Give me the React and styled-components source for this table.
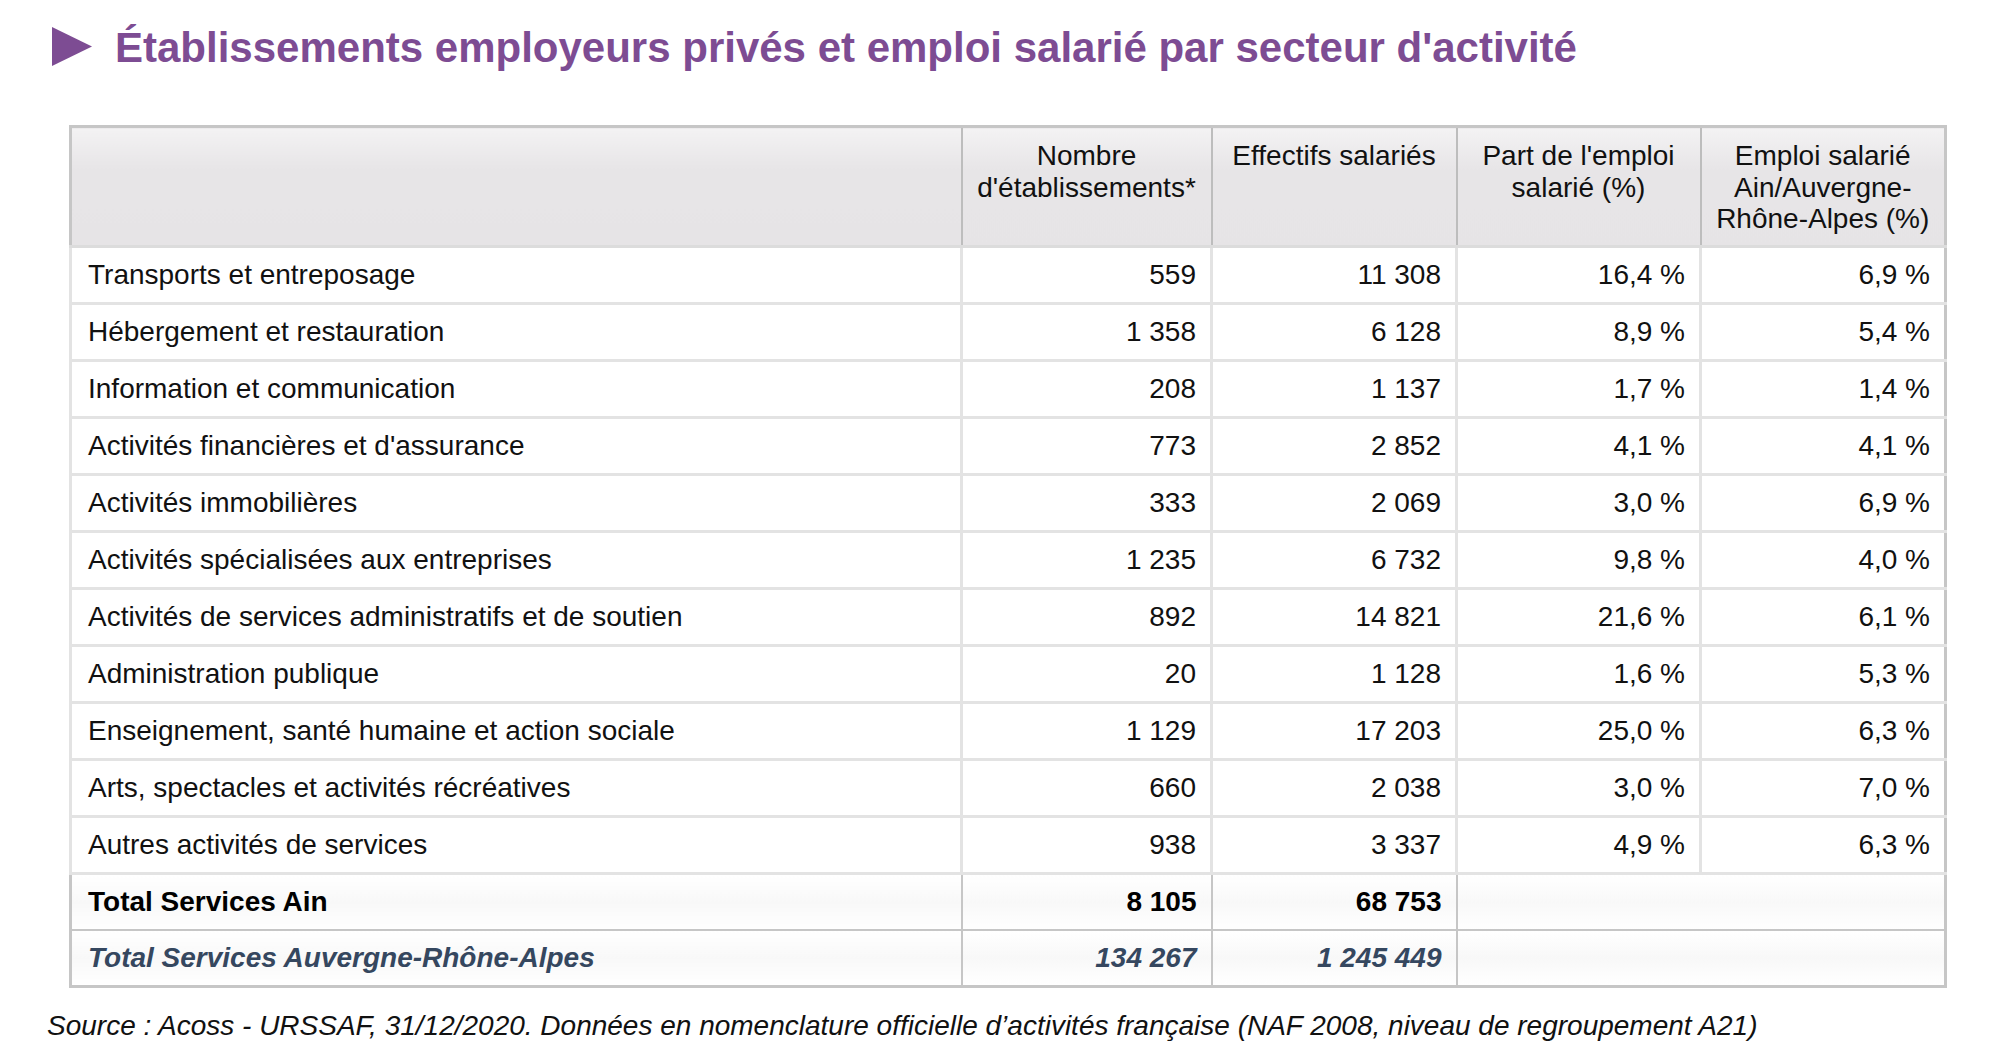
import styled, { createGlobalStyle } from "styled-components";

const rows = [
  ["Transports et entreposage", "559", "11 308", "16,4 %", "6,9 %"],
  ["Hébergement et restauration", "1 358", "6 128", "8,9 %", "5,4 %"],
  ["Information et communication", "208", "1 137", "1,7 %", "1,4 %"],
  ["Activités financières et d'assurance", "773", "2 852", "4,1 %", "4,1 %"],
  ["Activités immobilières", "333", "2 069", "3,0 %", "6,9 %"],
  ["Activités spécialisées aux entreprises", "1 235", "6 732", "9,8 %", "4,0 %"],
  ["Activités de services administratifs et de soutien", "892", "14 821", "21,6 %", "6,1 %"],
  ["Administration publique", "20", "1 128", "1,6 %", "5,3 %"],
  ["Enseignement, santé humaine et action sociale", "1 129", "17 203", "25,0 %", "6,3 %"],
  ["Arts, spectacles et activités récréatives", "660", "2 038", "3,0 %", "7,0 %"],
  ["Autres activités de services", "938", "3 337", "4,9 %", "6,3 %"],
];

const totals = [
  { label: "Total Services Ain", a: "8 105", b: "68 753", tone: "ain" },
  { label: "Total Services Auvergne-Rhône-Alpes", a: "134 267", b: "1 245 449", tone: "region" },
];

const GlobalStyle = createGlobalStyle`
  body {
    margin: 0;
    background: #ffffff;
    font-family: "Liberation Sans", Arial, sans-serif;
    color: #111111;
  }
`;

const Page = styled.div`
  padding-top: 27px;
`;

const TitleRow = styled.div`
  display: flex;
  align-items: flex-start;
  gap: 23px;
  padding-left: 52px;
  height: 40px;
`;

const Title = styled.h1`
  margin: 0;
  font-size: 42px;
  line-height: 42px;
  font-weight: bold;
  color: #7d4c93;
  white-space: nowrap;
`;

const Table = styled.table`
  margin: 58px 0 0 69px;
  width: 1875px;
  border-collapse: collapse;
  border: 3px solid #c6c6c6;
  font-size: 28px;
  table-layout: fixed;
`;

const Th = styled.th`
  height: 120px;
  box-sizing: border-box;
  padding: 12px 8px 0;
  vertical-align: top;
  font-weight: normal;
  line-height: 31.5px;
  text-align: center;
  background: linear-gradient(#f3f2f3, #e7e5e7 35%, #e6e4e6);
  border-left: 2px solid #bdbdbd;
  border-bottom: 3px solid #dcdcdc;
`;

const Td = styled.td`
  height: 54px;
  padding: 0 14px 0 16px;
  text-align: ${({ $num }) => ($num ? "right" : "left")};
  vertical-align: middle;
  white-space: nowrap;
  border-bottom: 3px solid #e3e3e3;
  border-left: 3px solid #e3e3e3;
`;

const TotalTd = styled(Td)`
  font-weight: bold;
  font-style: ${({ $tone }) => ($tone === "region" ? "italic" : "normal")};
  color: ${({ $tone }) => ($tone === "region" ? "#35475f" : "#000000")};
  border-top: 2px solid #c6c6c6;
  border-bottom: 2px solid #c6c6c6;
  border-left: 2px solid #c6c6c6;
  background: linear-gradient(#ffffff, #f8f8f8 50%, #ffffff);
`;

const Source = styled.p`
  margin: 22px 0 0 47px;
  font-size: 28px;
  font-style: italic;
  color: #111111;
`;

const Triangle = () => (
  <svg width="40" height="39" viewBox="0 0 40 39">
    <polygon points="0,0 40,19.5 0,39" fill="#7d4c93" />
  </svg>
);

export default function App() {
  return (
    <Page>
      <GlobalStyle />
      <TitleRow>
        <Triangle />
        <Title>Établissements employeurs privés et emploi salarié par secteur d'activité</Title>
      </TitleRow>
      <Table>
        <colgroup>
          <col style={{ width: 891 }} />
          <col style={{ width: 250 }} />
          <col style={{ width: 245 }} />
          <col style={{ width: 244 }} />
          <col style={{ width: 245 }} />
        </colgroup>
        <thead>
          <tr>
            <Th />
            <Th>Nombre d'établissements*</Th>
            <Th>Effectifs salariés</Th>
            <Th>Part de l'emploi salarié (%)</Th>
            <Th>Emploi salarié Ain/Auvergne-Rhône-Alpes (%)</Th>
          </tr>
        </thead>
        <tbody>
          {rows.map(r => (
            <tr key={r[0]}>
              <Td>{r[0]}</Td>
              <Td $num>{r[1]}</Td>
              <Td $num>{r[2]}</Td>
              <Td $num>{r[3]}</Td>
              <Td $num>{r[4]}</Td>
            </tr>
          ))}
          {totals.map(t => (
            <tr key={t.label}>
              <TotalTd $tone={t.tone}>{t.label}</TotalTd>
              <TotalTd $tone={t.tone} $num>{t.a}</TotalTd>
              <TotalTd $tone={t.tone} $num>{t.b}</TotalTd>
              <TotalTd $tone={t.tone} colSpan={2} />
            </tr>
          ))}
        </tbody>
      </Table>
      <Source>
        Source : Acoss - URSSAF, 31/12/2020. Données en nomenclature officielle d’activités française (NAF 2008, niveau de regroupement A21)
      </Source>
    </Page>
  );
}
